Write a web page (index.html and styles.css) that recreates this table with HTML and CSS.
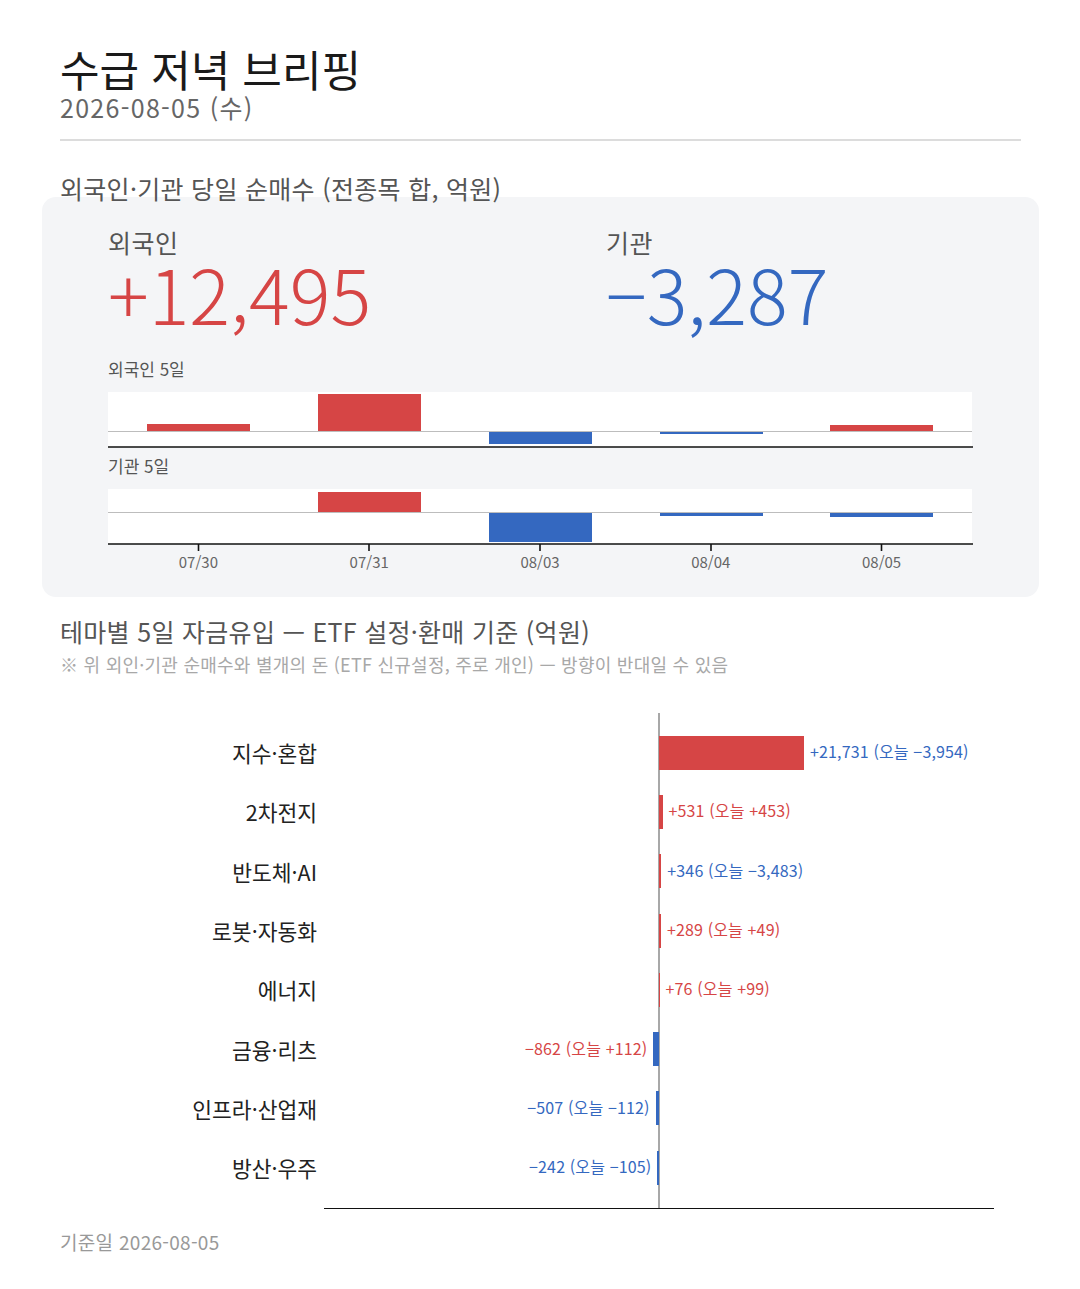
FILE: index.html
```html
<!DOCTYPE html>
<html lang="ko">
<head>
<meta charset="utf-8">
<title>수급 저녁 브리핑</title>
<link rel="stylesheet" href="styles.css">
</head>
<body>
<main class="page">
  <header class="head">
    <h1 class="title">수급 저녁 브리핑</h1>
    <div class="date">2026-08-05 (수)</div>
  </header>

  <h2 class="section-title">외국인·기관 당일 순매수 (전종목 합, 억원)</h2>
  <section class="card">
    <div class="kpis">
      <div class="kpi">
        <div class="kpi-label">외국인</div>
        <div class="kpi-value up">+12,495</div>
      </div>
      <div class="kpi">
        <div class="kpi-label">기관</div>
        <div class="kpi-value down">−3,287</div>
      </div>
    </div>

    <div class="mini-label first">외국인 5일</div>
    <svg class="mini-chart" width="866" height="56" viewBox="0 0 866 56">
      <rect x="0" y="0" width="864" height="55" fill="#fff"/>
      <line x1="0" y1="39.5" x2="864" y2="39.5" stroke="#bdbdbd" stroke-width="1.2"/>
      <rect x="39" y="32" width="103" height="7" fill="#d64545"/>
      <rect x="210" y="2" width="103" height="37" fill="#d64545"/>
      <rect x="381" y="40" width="103" height="12" fill="#3468c0"/>
      <rect x="552" y="40" width="103" height="2" fill="#3468c0"/>
      <rect x="722" y="33" width="103" height="6" fill="#d64545"/>
      <line x1="0" y1="55" x2="865" y2="55" stroke="#111" stroke-width="1.6"/>
    </svg>

    <div class="mini-label">기관 5일</div>
    <svg class="mini-chart" width="866" height="62" viewBox="0 0 866 62">
      <rect x="0" y="0" width="864" height="55" fill="#fff"/>
      <line x1="0" y1="23.5" x2="864" y2="23.5" stroke="#bdbdbd" stroke-width="1.2"/>
      <rect x="210" y="3" width="103" height="20" fill="#d64545"/>
      <rect x="381" y="24" width="103" height="29" fill="#3468c0"/>
      <rect x="552" y="24" width="103" height="3" fill="#3468c0"/>
      <rect x="722" y="24" width="103" height="4" fill="#3468c0"/>
      <line x1="0" y1="55" x2="865" y2="55" stroke="#111" stroke-width="1.6"/>
      <g stroke="#111" stroke-width="1.6">
        <line x1="90.5" y1="55" x2="90.5" y2="62"/>
        <line x1="261" y1="55" x2="261" y2="62"/>
        <line x1="432" y1="55" x2="432" y2="62"/>
        <line x1="603" y1="55" x2="603" y2="62"/>
        <line x1="773.5" y1="55" x2="773.5" y2="62"/>
      </g>
    </svg>
    <div class="ticks">
      <span>07/30</span><span>07/31</span><span>08/03</span><span>08/04</span><span>08/05</span>
    </div>
  </section>

  <h2 class="section-title theme-title">테마별 5일 자금유입 — ETF 설정·환매 기준 (억원)</h2>
  <p class="note">※ 위 외인·기관 순매수와 별개의 돈 (ETF 신규설정, 주로 개인) — 방향이 반대일 수 있음</p>

  <section class="theme-chart">
    <div class="labels">
      <div class="label">지수·혼합</div>
      <div class="label">2차전지</div>
      <div class="label">반도체·AI</div>
      <div class="label">로봇·자동화</div>
      <div class="label">에너지</div>
      <div class="label">금융·리츠</div>
      <div class="label">인프라·산업재</div>
      <div class="label">방산·우주</div>
    </div>
    <div class="plot">
      <div class="row">
        <div class="neg"></div>
        <div class="pos"><span class="bar up-bg" style="width:145px"></span><span class="val down">+21,731 (오늘 −3,954)</span></div>
      </div>
      <div class="row">
        <div class="neg"></div>
        <div class="pos"><span class="bar up-bg" style="width:3.5px"></span><span class="val up">+531 (오늘 +453)</span></div>
      </div>
      <div class="row">
        <div class="neg"></div>
        <div class="pos"><span class="bar up-bg" style="width:2.3px"></span><span class="val down">+346 (오늘 −3,483)</span></div>
      </div>
      <div class="row">
        <div class="neg"></div>
        <div class="pos"><span class="bar up-bg" style="width:1.9px"></span><span class="val up">+289 (오늘 +49)</span></div>
      </div>
      <div class="row">
        <div class="neg"></div>
        <div class="pos"><span class="bar up-bg" style="width:0.5px"></span><span class="val up">+76 (오늘 +99)</span></div>
      </div>
      <div class="row">
        <div class="neg"><span class="val up">−862 (오늘 +112)</span><span class="bar down-bg" style="width:5.7px"></span></div>
        <div class="pos"></div>
      </div>
      <div class="row">
        <div class="neg"><span class="val down">−507 (오늘 −112)</span><span class="bar down-bg" style="width:3.4px"></span></div>
        <div class="pos"></div>
      </div>
      <div class="row">
        <div class="neg"><span class="val down">−242 (오늘 −105)</span><span class="bar down-bg" style="width:1.6px"></span></div>
        <div class="pos"></div>
      </div>
    </div>
  </section>

  <footer class="foot">기준일 2026-08-05</footer>
</main>
</body>
</html>
```
FILE: styles.css
```css
* { box-sizing: border-box; }

html, body {
  margin: 0;
  padding: 0;
  background: #fff;
}

body {
  font-family: "Noto Sans CJK KR", "Noto Sans", sans-serif;
  color: #1a1a1a;
}

.page {
  width: 1080px;
  padding: 44px 59px 0 60px;
}

.head {
  padding-bottom: 17px;
  border-bottom: 2px solid #dcdcdc;
}

.title {
  margin: 0;
  font-size: 43px;
  line-height: 48px;
  font-weight: 400;
  color: #1a1a1a;
}

.date {
  margin-top: 1px;
  font-size: 25px;
  line-height: 29px;
  letter-spacing: 1.3px;
  color: #666;
}

.section-title {
  margin: 33px 0 -6px;
  font-size: 25px;
  line-height: 29px;
  letter-spacing: 0.3px;
  font-weight: 400;
  color: #555;
}

.card {
  margin: 0 -18px;
  padding: 31px 65px 26px 66px;
  background: #f4f5f7;
  border-radius: 14px;
}

.kpis {
  display: grid;
  grid-template-columns: 498px 1fr;
}

.kpi-label {
  font-size: 25px;
  line-height: 29px;
  letter-spacing: 0.5px;
  color: #555;
}

.kpi-value {
  font-size: 76px;
  line-height: 70px;
  font-weight: 300;
}

.up { color: #d64545; }
.down { color: #3468c0; }
.up-bg { background: #d64545; }
.down-bg { background: #3468c0; }

.mini-label {
  margin-top: 8px;
  margin-bottom: 13px;
  font-size: 17px;
  line-height: 20px;
  color: #555;
}

.mini-label.first {
  margin-top: 32px;
}

.mini-chart {
  display: block;
}

.ticks {
  display: flex;
  width: 864px;
  padding: 0 5px;
  margin-top: 2px;
}

.ticks span {
  flex: 1;
  text-align: center;
  font-size: 15px;
  line-height: 18px;
  color: #666;
}

.theme-title {
  margin-top: 20px;
  margin-bottom: 0;
}

.note {
  margin: 8px 0 0;
  font-size: 18px;
  line-height: 20px;
  letter-spacing: 0.25px;
  color: #a8a8a8;
}

.theme-chart {
  margin-top: 39px;
  display: grid;
  grid-template-columns: 257px 670px;
  column-gap: 7px;
}

.labels,
.plot {
  padding: 10px 0 11px;
}

.label {
  height: 59.3px;
  display: flex;
  align-items: center;
  justify-content: flex-end;
  font-size: 21.5px;
  color: #222;
}

.plot {
  border-bottom: 1.6px solid #111;
  background: linear-gradient(to right, transparent 334px, #a8a8a8 334px, #a8a8a8 336px, transparent 336px);
}

.row {
  height: 59.3px;
  display: grid;
  grid-template-columns: 335px 335px;
}

.neg,
.pos {
  display: flex;
  align-items: center;
  gap: 6px;
}

.neg { justify-content: flex-end; }
.pos { justify-content: flex-start; }

.bar {
  display: block;
  height: 34px;
  flex: none;
}

.val {
  font-size: 16px;
  line-height: 20px;
  letter-spacing: 0.15px;
  padding-bottom: 3px;
  white-space: nowrap;
}

.foot {
  margin-top: 22px;
  font-size: 19px;
  line-height: 22px;
  letter-spacing: 0.3px;
  color: #999;
}
```
